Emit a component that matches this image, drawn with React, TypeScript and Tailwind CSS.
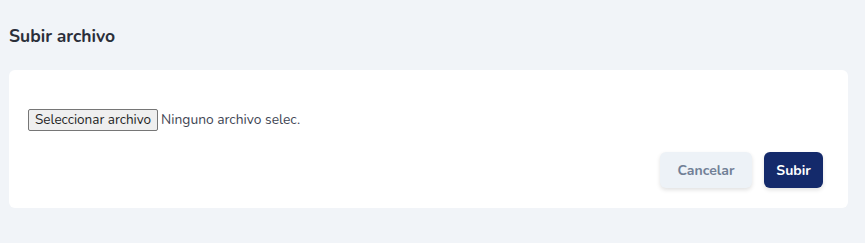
export default function App() {
  return (
    <div className="min-h-[243px] w-full bg-[#f1f4f8] pl-[9px] pr-[17px] pt-[26px] font-['Nunito','Lato',sans-serif]">
      <h2 className="text-[17.5px] font-bold leading-[20px] text-[#2b2f3a]">Subir archivo</h2>
      <div className="mt-[24px] rounded-[6px] bg-white pb-[20px] pl-[19px] pr-[25px] pt-[39px]">
        <div className="flex items-center gap-[3px] text-[13.8px] text-[#3f4654]">
          <button className="h-[22px] rounded-[2px] border border-[#767676] bg-[#efefef] px-[6px] text-[13.5px] leading-none text-[#1f1f1f]">
            Seleccionar archivo
          </button>
          <span className="pt-[1px]">Ninguno archivo selec.</span>
        </div>
        <div className="mt-[21px] flex justify-end gap-[12px]">
          <button className="h-[36px] w-[92px] rounded-[6px] bg-[#edf2f7] text-[14px] font-bold text-[#718096] shadow-[0_2px_4px_rgba(0,0,0,0.12)]">
            Cancelar
          </button>
          <button className="h-[36px] w-[59px] rounded-[6px] bg-[#142a6b] text-[14px] font-bold text-white shadow-[0_2px_4px_rgba(0,0,0,0.12)]">
            Subir
          </button>
        </div>
      </div>
    </div>
  );
}
